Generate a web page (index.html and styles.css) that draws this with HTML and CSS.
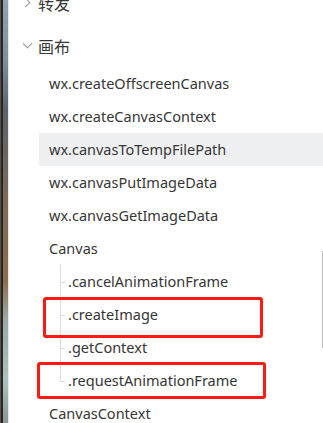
FILE: index.html
```html
<!DOCTYPE html>
<html lang="zh-CN">
<head>
<meta charset="UTF-8">
<title>API 目录</title>
<link rel="stylesheet" href="styles.css">
</head>
<body>
<div class="page">
  <div class="strip"></div>
  <nav class="menu">
    <div class="group">
      <div class="group-title">
        <span class="arrow-box"><span class="arrow arrow-right"></span></span>转发
      </div>
    </div>
    <div class="group">
      <div class="group-title">
        <span class="arrow-box"><span class="arrow arrow-down"></span></span>画布
      </div>
      <ul class="items">
        <li class="item">wx.createOffscreenCanvas</li>
        <li class="item">wx.createCanvasContext</li>
        <li class="item active">wx.canvasToTempFilePath</li>
        <li class="item">wx.canvasPutImageData</li>
        <li class="item">wx.canvasGetImageData</li>
        <li class="item">Canvas</li>
        <li>
          <ul class="sub">
            <li class="sub-item">.cancelAnimationFrame</li>
            <li class="sub-item">.createImage</li>
            <li class="sub-item">.getContext</li>
            <li class="sub-item">.requestAnimationFrame</li>
          </ul>
        </li>
        <li class="item">CanvasContext</li>
      </ul>
    </div>
  </nav>
  <div class="scrollbar"></div>
  <div class="mark mark-one"></div>
  <div class="mark mark-two"></div>
</div>
</body>
</html>
```

FILE: styles.css
```css
:root{
  --text:#363636;
  --muted:#9a9a9a;
  --line:#dcdcdc;
  --hover:#eff0f2;
  --mark:#ff1a12;
}
*{box-sizing:border-box;margin:0;padding:0;}
body{background:#fff;font-family:"Noto Sans","Noto Sans CJK SC",sans-serif;color:var(--text);overflow:hidden;}
ul{list-style:none;}

.page{position:relative;display:flex;height:423px;overflow:hidden;}
.strip{width:9px;flex:none;border-right:1px solid #e6e6e6;
  background:linear-gradient(90deg,#7a7a7a 0,#2b2622 1px,#2b2622 3px,transparent 3px),
    linear-gradient(180deg,#8fa3b3 0,#7f8f9c 60px,#59636c 110px,#7b6a58 200px,#8a6d4c 280px,#9aa8a6 320px,#a9c2c1 380px,#8a9695 423px);}

.menu{flex:1;margin-top:-19px;padding-left:30px;}
.group-title{height:43px;display:flex;align-items:center;font-size:16px;margin-left:-30px;padding-left:10px;}
.arrow-box{width:16px;height:16px;margin-right:3px;display:flex;align-items:center;justify-content:center;}
.arrow{width:7px;height:7px;border:solid var(--muted);border-width:0 1.5px 1.5px 0;}
.arrow-right{transform:translateX(-2px) rotate(-45deg);}
.arrow-down{transform:translateY(-2px) rotate(45deg);}

.item{height:33px;line-height:33px;padding-left:10px;font-size:14.5px;white-space:nowrap;}
.item.active{background:var(--hover);}

.sub{position:relative;margin-left:21px;}
.sub-item{position:relative;height:33px;line-height:33px;padding-left:8px;font-size:14.5px;white-space:nowrap;}
.sub-item::before{content:"";position:absolute;left:0;top:0;height:100%;border-left:1px solid var(--line);}
.sub-item:last-child::before{height:50%;}
.sub-item::after{content:"";position:absolute;left:0;top:50%;width:5px;border-top:1px solid var(--line);}

.scrollbar{position:absolute;left:322px;top:251px;width:1px;height:97px;background:#bdbdbd;}

.mark{position:absolute;border:3px solid var(--mark);border-radius:3px;}
.mark-one{left:43px;top:297px;width:220px;height:41px;}
.mark-two{left:37px;top:362px;width:229px;height:37px;}
```
